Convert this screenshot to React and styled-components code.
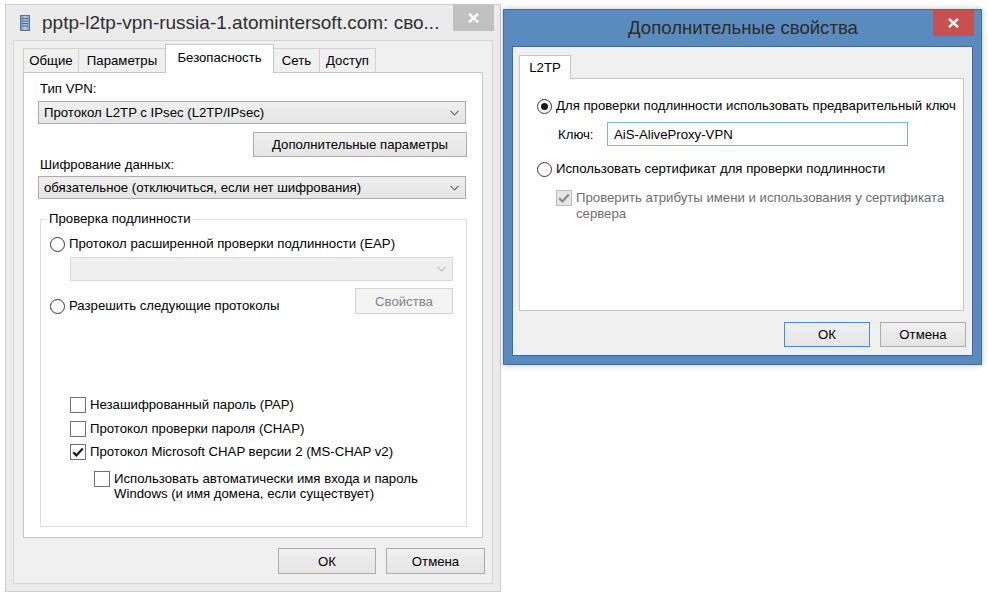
import React from "react";
import styled, { createGlobalStyle, css } from "styled-components";

const GlobalStyle = createGlobalStyle`
  html, body {
    margin: 0;
    padding: 0;
    background: #ffffff;
  }
  body {
    font-family: "Liberation Sans", Arial, sans-serif;
    font-size: 13.2px;
    color: #000;
  }
  * {
    box-sizing: border-box;
  }
`;

const Desktop = styled.div`
  display: flex;
  align-items: flex-start;
  gap: 2px;
  width: 988px;
  height: 598px;
  padding: 4px 0 0 5px;
  overflow: hidden;
`;

const Window = styled.div`
  display: flex;
  flex-direction: column;
  width: ${(p) => p.$w}px;
  height: ${(p) => p.$h}px;
  margin-top: ${(p) => p.$top || 0}px;
  padding: 0 ${(p) => p.$pad}px ${(p) => p.$pad}px;
  background: ${(p) => (p.$active ? "#5a8bbf" : "#ebebeb")};
  border: 1px solid ${(p) => (p.$active ? "#3f6fa5" : "#cdcdcd")};
  box-shadow: ${(p) => (p.$active ? "0 0 6px rgba(0,0,0,0.25)" : "none")};
`;

const TitleBar = styled.div`
  display: flex;
  align-items: center;
  height: ${(p) => p.$h}px;
  flex: none;
`;

const TitleIcon = styled.span`
  display: flex;
  margin: 0 12px 0 7px;
`;

const TitleText = styled.div`
  flex: 1;
  font-size: ${(p) => (p.$center ? 18.6 : 19)}px;
  color: ${(p) => (p.$active ? "#2b2b2b" : "#303030")};
  white-space: nowrap;
  overflow: hidden;
  text-align: ${(p) => (p.$center ? "center" : "left")};
  padding-left: ${(p) => (p.$center ? 41 : 0)}px;
`;

const CloseButton = styled.div`
  align-self: flex-start;
  display: flex;
  align-items: center;
  justify-content: center;
  width: 41px;
  height: ${(p) => p.$h}px;
  margin: ${(p) => p.$mt}px -1px 0 0;
  background: ${(p) => (p.$active ? "#c75050" : "#c1c1c1")};
`;

const Client = styled.div`
  flex: 1;
  display: flex;
  flex-direction: column;
  background: #f0f0f0;
  border: 1px solid ${(p) => (p.$active ? "#3a6a9e" : "#d6d6d6")};
  padding: ${(p) => p.$pad};
`;

const TabStrip = styled.div`
  display: flex;
  align-items: flex-end;
  height: ${(p) => p.$h}px;
  flex: none;
`;

const Tab = styled.div`
  position: relative;
  display: flex;
  align-items: center;
  justify-content: center;
  width: ${(p) => p.$w}px;
  height: 24px;
  margin-left: -1px;
  border: 1px solid #d2d2d2;
  border-bottom: none;
  background: #f0f0f0;
  white-space: nowrap;
  &:first-child {
    margin-left: 0;
  }
  ${(p) =>
    p.$selected &&
    css`
      height: ${p.$h || 29}px;
      margin-bottom: -1px;
      background: #ffffff;
      border-color: #c6c6c6;
      z-index: 1;
      padding-bottom: ${p.$h ? 0 : 4}px;
    `}
`;

const TabPanel = styled.div`
  display: flex;
  flex-direction: column;
  height: ${(p) => p.$h}px;
  width: ${(p) => p.$w}px;
  flex: none;
  background: #ffffff;
  border: 1px solid #c6c6c6;
  padding: ${(p) => p.$pad};
`;

const Label = styled.div`
  line-height: 14px;
  margin: ${(p) => p.$m || "0"};
  white-space: nowrap;
`;

const Select = styled.div`
  display: flex;
  align-items: center;
  justify-content: space-between;
  height: ${(p) => p.$h || 23}px;
  margin: ${(p) => p.$m || "0"};
  padding: 0 6px 0 5px;
  border: 1px solid ${(p) => (p.$disabled ? "#d9d9d9" : "#acacac")};
  background: ${(p) =>
    p.$disabled ? "#efefef" : "linear-gradient(#f0f0f0, #e5e5e5)"};
  white-space: nowrap;
`;

const Button = styled.div`
  display: flex;
  align-items: center;
  justify-content: center;
  width: ${(p) => p.$w}px;
  height: ${(p) => p.$h || 25}px;
  margin: ${(p) => p.$m || "0"};
  align-self: ${(p) => p.$align || "auto"};
  flex: none;
  border: 1px solid ${(p) => (p.$default ? "#3c8ee4" : p.$disabled ? "#d5d5d5" : "#acacac")};
  background: ${(p) =>
    p.$disabled ? "#f4f4f4" : "linear-gradient(#f0f0f0, #e5e5e5)"};
  color: ${(p) => (p.$disabled ? "#838383" : "#000")};
  white-space: nowrap;
`;

const ButtonRow = styled.div`
  display: flex;
  justify-content: flex-end;
  gap: 10px;
  margin: ${(p) => p.$m};
`;

const GroupBox = styled.fieldset`
  margin: ${(p) => p.$m};
  padding: 8px 13px 25px 9px;
  border: 1px solid #dcdcdc;
  min-width: 0;
  display: flex;
  flex-direction: column;
`;

const Legend = styled.legend`
  margin-left: -3px;
  padding: 0 2px;
  line-height: 16px;
`;

const OptionRow = styled.div`
  display: flex;
  align-items: ${(p) => (p.$top ? "flex-start" : "center")};
  gap: 4px;
  min-height: 18px;
  margin: ${(p) => p.$m || "0"};
  color: ${(p) => (p.$disabled ? "#6d6d6d" : "#000")};
  white-space: nowrap;
`;

const OptionText = styled.div`
  line-height: ${(p) => p.$lh || 16}px;
`;

const RadioCircle = styled.span`
  display: flex;
  align-items: center;
  justify-content: center;
  width: 15px;
  height: 15px;
  flex: none;
  border-radius: 50%;
  border: 1px solid #333333;
  background: #ffffff;
  &::after {
    content: "";
    display: ${(p) => (p.$checked ? "block" : "none")};
    width: 7px;
    height: 7px;
    border-radius: 50%;
    background: #1a1a1a;
  }
`;

const CheckBox = styled.span`
  display: flex;
  align-items: center;
  justify-content: center;
  width: 16px;
  height: 16px;
  flex: none;
  border: 1px solid ${(p) => (p.$disabled ? "#bcbcbc" : "#707070")};
  background: ${(p) => (p.$disabled ? "#e6e6e6" : "#ffffff")};
`;

const SplitRow = styled.div`
  display: flex;
  justify-content: space-between;
  align-items: flex-start;
  margin: ${(p) => p.$m};
`;

const KeyRow = styled.div`
  display: flex;
  align-items: center;
  margin: ${(p) => p.$m};
`;

const KeyLabel = styled.div`
  width: 49px;
  flex: none;
`;

const TextInput = styled.div`
  display: flex;
  align-items: center;
  width: ${(p) => p.$w}px;
  height: 24px;
  padding-left: 6px;
  border: 1px solid #7eb4ea;
  background: #ffffff;
`;

const Chevron = ({ color = "#6b6b6b" }) => (
  <svg width="9" height="6" viewBox="0 0 9 6">
    <polyline points="0.5,0.8 4.5,4.8 8.5,0.8" fill="none" stroke={color} strokeWidth="1.2" />
  </svg>
);

const CheckMark = ({ color = "#1a1a1a" }) => (
  <svg width="12" height="10" viewBox="0 0 12 10">
    <path d="M1.2 5.2 L4.4 8.4 L10.8 1.4" fill="none" stroke={color} strokeWidth="2.2" />
  </svg>
);

const CloseGlyph = () => (
  <svg width="11" height="10" viewBox="0 0 11 10">
    <path d="M1 0.8 L10 9.2 M10 0.8 L1 9.2" stroke="#ffffff" strokeWidth="2.3" />
  </svg>
);

const ServerIcon = () => (
  <svg width="10" height="16" viewBox="0 0 10 16">
    <defs>
      <linearGradient id="srv" x1="0" x2="1">
        <stop offset="0" stopColor="#6f8fb5" />
        <stop offset="0.5" stopColor="#b9cde3" />
        <stop offset="1" stopColor="#7d9bc0" />
      </linearGradient>
    </defs>
    <rect x="0.5" y="0.5" width="9" height="15" fill="url(#srv)" stroke="#56729a" />
    <line x1="2" y1="3.5" x2="8" y2="3.5" stroke="#4d6a92" />
    <line x1="2" y1="6" x2="8" y2="6" stroke="#4d6a92" />
    <line x1="2" y1="8.5" x2="8" y2="8.5" stroke="#4d6a92" />
    <line x1="2" y1="11" x2="8" y2="11" stroke="#4d6a92" />
  </svg>
);

const Radio = ({ checked, children, m }) => (
  <OptionRow $m={m}>
    <RadioCircle $checked={checked} />
    <OptionText>{children}</OptionText>
  </OptionRow>
);

const Check = ({ checked, disabled, children, m, lh }) => (
  <OptionRow $m={m} $top={!!lh} $disabled={disabled}>
    <CheckBox $disabled={disabled}>
      {checked && <CheckMark color={disabled ? "#8a8a8a" : "#1a1a1a"} />}
    </CheckBox>
    <OptionText $lh={lh}>{children}</OptionText>
  </OptionRow>
);

const tabs = [
  { label: "Общие", w: 56 },
  { label: "Параметры", w: 88 },
  { label: "Безопасность", w: 109, selected: true },
  { label: "Сеть", w: 47 },
  { label: "Доступ", w: 57 },
];

const PropertiesWindow = () => (
  <Window $w={496} $h={588} $pad={7}>
    <TitleBar $h={35}>
      <TitleIcon>
        <ServerIcon />
      </TitleIcon>
      <TitleText>pptp-l2tp-vpn-russia-1.atomintersoft.com: сво...</TitleText>
      <CloseButton $h={27} $mt={-1}>
        <CloseGlyph />
      </CloseButton>
    </TitleBar>
    <Client $pad="3px 8px 0 9px">
      <TabStrip $h={28}>
        {tabs.map((t) => (
          <Tab key={t.label} $w={t.w} $selected={t.selected}>
            {t.label}
          </Tab>
        ))}
      </TabStrip>
      <TabPanel $h={466} $w={460} $pad="9px 16px 0 14px">
        <Label $m="0 0 0 2px">Тип VPN:</Label>
        <Select $m="5px 0 0">
          Протокол L2TP с IPsec (L2TP/IPsec)
          <Chevron />
        </Select>
        <Button $w={214} $m="8px -1px 0 0" $align="flex-end">
          Дополнительные параметры
        </Button>
        <Label $m="1px 0 0 2px">Шифрование данных:</Label>
        <Select $m="4px 0 0">
          обязательное (отключиться, если нет шифрования)
          <Chevron />
        </Select>
        <GroupBox $m="12px -1px 0 2px">
          <Legend>Проверка подлинности</Legend>
          <Radio>Протокол расширенной проверки подлинности (EAP)</Radio>
          <Select $disabled $h={24} $m="4px 0 0 20px">
            <span />
            <Chevron color="#bdbdbd" />
          </Select>
          <SplitRow $m="7px 0 0">
            <Radio m="9px 0 0">Разрешить следующие протоколы</Radio>
            <Button $w={98} $h={26} $disabled>
              Свойства
            </Button>
          </SplitRow>
          <Check m="81px 0 0 20px">Незашифрованный пароль (PAP)</Check>
          <Check m="6px 0 0 20px">Протокол проверки пароля (CHAP)</Check>
          <Check checked m="5px 0 0 20px">
            Протокол Microsoft CHAP версии 2 (MS-CHAP v2)
          </Check>
          <Check m="10px 0 0 44px" lh={15}>
            Использовать автоматически имя входа и пароль
            <br />
            Windows (и имя домена, если существует)
          </Check>
        </GroupBox>
      </TabPanel>
      <ButtonRow $m="10px -1px 0 0">
        <Button $w={98} $h={26}>
          ОК
        </Button>
        <Button $w={99} $h={26}>
          Отмена
        </Button>
      </ButtonRow>
    </Client>
  </Window>
);

const AdvancedWindow = () => (
  <Window $w={479} $h={356} $pad={8} $top={5} $active>
    <TitleBar $h={36}>
      <TitleText $active $center>
        Дополнительные свойства
      </TitleText>
      <CloseButton $h={26} $mt={0} $active>
        <CloseGlyph />
      </CloseButton>
    </TitleBar>
    <Client $pad="8px 7px 0 6px" $active>
      <TabStrip $h={23}>
        <Tab $w={52} $selected $h={24}>
          L2TP
        </Tab>
      </TabStrip>
      <TabPanel $h={233} $w={445} $pad="18px 0 0 17px">
        <Radio checked>Для проверки подлинности использовать предварительный ключ</Radio>
        <KeyRow $m="7px 0 0 21px">
          <KeyLabel>Ключ:</KeyLabel>
          <TextInput $w={301}>AiS-AliveProxy-VPN</TextInput>
        </KeyRow>
        <Radio m="14px 0 0">Использовать сертификат для проверки подлинности</Radio>
        <Check checked disabled m="12px 0 0 19px" lh={16}>
          Проверить атрибуты имени и использования у сертификата
          <br />
          сервера
        </Check>
      </TabPanel>
      <ButtonRow $m="11px -1px 0 0">
        <Button $w={86} $default>
          ОК
        </Button>
        <Button $w={86}>Отмена</Button>
      </ButtonRow>
    </Client>
  </Window>
);

export default function App() {
  return (
    <>
      <GlobalStyle />
      <Desktop>
        <PropertiesWindow />
        <AdvancedWindow />
      </Desktop>
    </>
  );
}
